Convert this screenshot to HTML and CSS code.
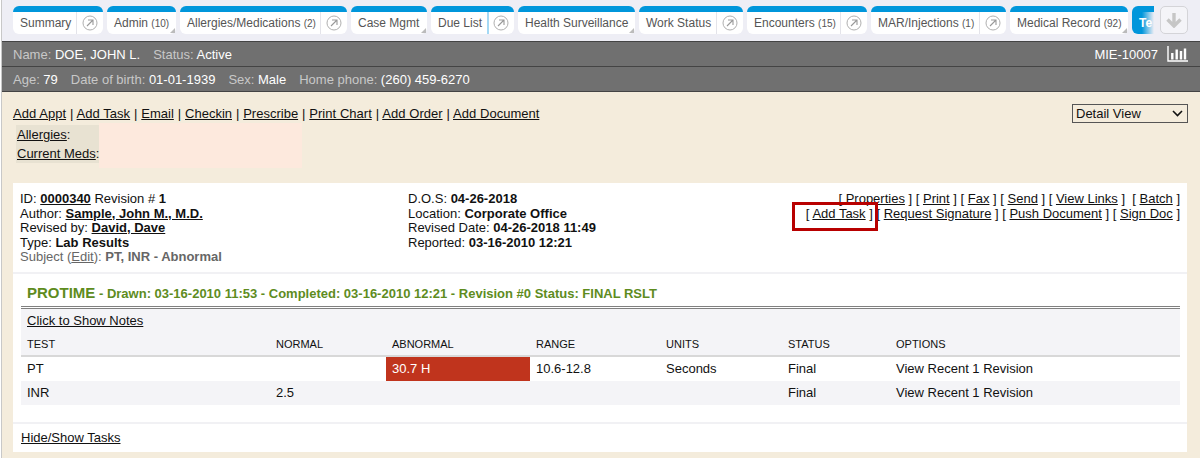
FILE: index.html
```html
<!DOCTYPE html>
<html lang="en">
<head>
    <meta charset="UTF-8">
    <title>Lab Results</title>
    <link rel="stylesheet" href="styles.css">
</head>
<body>
    <svg class="defs" width="0" height="0">
        <symbol id="jump" viewBox="0 0 16 16">
            <circle cx="8" cy="8" r="7" fill="none" stroke="#b0b0b0" stroke-width="1"/>
            <path d="M5 11 L11 5 M6 5 H11 V10" fill="none" stroke="#999" stroke-width="1.1"/>
        </symbol>
    </svg>

    <div class="page">
        <div class="tabbar">
            <div class="tab w-summary"><span class="tab-label">Summary</span><span class="tab-jump"><svg class="jump"><use href="#jump"/></svg></span></div>
            <div class="tab w-admin"><span class="tab-label">Admin <small>(10)</small></span><i class="corner"></i></div>
            <div class="tab w-allergies"><span class="tab-label">Allergies/Medications <small>(2)</small></span><span class="tab-jump"><svg class="jump"><use href="#jump"/></svg></span></div>
            <div class="tab w-case"><span class="tab-label">Case Mgmt</span><i class="corner"></i></div>
            <div class="tab w-due"><span class="tab-label">Due List</span><span class="tab-jump due-jump"><svg class="jump"><use href="#jump"/></svg></span></div>
            <div class="tab w-health"><span class="tab-label">Health Surveillance</span><i class="corner"></i></div>
            <div class="tab w-work"><span class="tab-label">Work Status</span><span class="tab-jump"><svg class="jump"><use href="#jump"/></svg></span></div>
            <div class="tab w-enc"><span class="tab-label">Encounters <small>(15)</small></span><span class="tab-jump"><svg class="jump"><use href="#jump"/></svg></span></div>
            <div class="tab w-mar"><span class="tab-label">MAR/Injections <small>(1)</small></span><span class="tab-jump"><svg class="jump"><use href="#jump"/></svg></span></div>
            <div class="tab w-med"><span class="tab-label">Medical Record <small>(92)</small></span><i class="corner"></i></div>
            <div class="tab tab-active"><span class="tab-label">Te</span></div>
            <div class="more-btn">
                <svg width="18" height="16" viewBox="0 0 18 16"><path d="M9 1 V14 M2.500 7.500 L9 14 L15.500 7.500" fill="none" stroke="#c6c6c6" stroke-width="3.4"/></svg>
            </div>
        </div>

        <div class="patient-bar">
            <div class="patient-info">
                <span class="item">Name: <b>DOE, JOHN L.</b></span>
                <span class="item">Status: <b>Active</b></span>
            </div>
            <div class="patient-id">
                <b>MIE-10007</b>
                <svg width="21" height="16" viewBox="0 0 21 16"><path d="M1 0 V15 H21" fill="none" stroke="#fff" stroke-width="1.400"/><path d="M5.300 7 V13.500 M9.700 3.500 V13.500 M14 5 V13.500 M18 2.500 V13.500" stroke="#fff" stroke-width="2.400"/></svg>
            </div>
        </div>
        <div class="patient-bar second">
            <div class="patient-info">
                <span class="item">Age: <b>79</b></span>
                <span class="item">Date of birth: <b>01-01-1939</b></span>
                <span class="item">Sex: <b>Male</b></span>
                <span class="item">Home phone: <b>(260) 459-6270</b></span>
            </div>
        </div>

        <div class="content">
            <div class="action-row">
                <div class="actions">
                    <a href="#">Add Appt</a> | <a href="#">Add Task</a> | <a href="#">Email</a> | <a href="#">Checkin</a> | <a href="#">Prescribe</a> | <a href="#">Print Chart</a> | <a href="#">Add Order</a> | <a href="#">Add Document</a>
                </div>
                <select class="view-select">
                    <option>Detail View</option>
                </select>
            </div>

            <div class="alerts">
                <div class="alert-labels">
                    <div><a href="#">Allergies</a>:</div>
                    <div><a href="#">Current Meds</a>:</div>
                </div>
                <div class="alert-values"></div>
            </div>

            <div class="panel">
                <div class="doc-head">
                    <div class="doc-col">
                        <div>ID: <a href="#"><b>0000340</b></a> Revision # <b>1</b></div>
                        <div>Author: <a href="#"><b>Sample, John M., M.D.</b></a></div>
                        <div>Revised by: <a href="#"><b>David, Dave</b></a></div>
                        <div>Type: <b>Lab Results</b></div>
                        <div class="subject">Subject (<a href="#">Edit</a>): <b>PT, INR - Abnormal</b></div>
                    </div>
                    <div class="doc-col col-mid">
                        <div>D.O.S: <b>04-26-2018</b></div>
                        <div>Location: <b>Corporate Office</b></div>
                        <div>Revised Date: <b>04-26-2018 11:49</b></div>
                        <div>Reported: <b>03-16-2010 12:21</b></div>
                    </div>
                    <div class="doc-links">
                        <div>[ <a href="#">Properties</a> ] [ <a href="#">Print</a> ] [ <a href="#">Fax</a> ] [ <a href="#">Send</a> ] [ <a href="#">View Links</a> ] &nbsp;[ <a href="#">Batch</a> ]</div>
                        <div><span class="highlight">[ <a href="#">Add Task</a> ]</span> [ <a href="#">Request Signature</a> ] [ <a href="#">Push Document</a> ] [ <a href="#">Sign Doc</a> ]</div>
                    </div>
                </div>

                <div class="result">
                    <div class="result-title"><span class="result-name">PROTIME</span> - Drawn: 03-16-2010 11:53 - Completed: 03-16-2010 12:21 - Revision #0 Status: FINAL RSLT</div>
                    <div class="notes-row"><a href="#">Click to Show Notes</a></div>
                    <table class="result-table">
                        <thead>
                            <tr>
                                <th class="c-test">TEST</th>
                                <th class="c-normal">NORMAL</th>
                                <th class="c-abn">ABNORMAL</th>
                                <th class="c-range">RANGE</th>
                                <th class="c-units">UNITS</th>
                                <th class="c-status">STATUS</th>
                                <th>OPTIONS</th>
                            </tr>
                        </thead>
                        <tbody>
                            <tr>
                                <td>PT</td>
                                <td></td>
                                <td class="abnormal">30.7 H</td>
                                <td>10.6-12.8</td>
                                <td>Seconds</td>
                                <td>Final</td>
                                <td>View Recent 1 Revision</td>
                            </tr>
                            <tr class="shade">
                                <td>INR</td>
                                <td>2.5</td>
                                <td></td>
                                <td></td>
                                <td></td>
                                <td>Final</td>
                                <td>View Recent 1 Revision</td>
                            </tr>
                        </tbody>
                    </table>
                </div>

                <div class="tasks-row"><a href="#">Hide/Show Tasks</a></div>
            </div>
        </div>
    </div>
</body>
</html>
```
FILE: styles.css
```css
html, body {
    margin: 0;
    padding: 0;
}
body {
    font-family: "Liberation Sans", Arial, sans-serif;
    font-size: 13px;
    color: #111;
    background-color: #fff;
    height: 458px;
    overflow: hidden;
    padding-left: 1px;
    box-sizing: border-box;
}
a {
    color: #111;
    text-decoration: underline;
}
.defs {
    display: block;
    height: 0;
}
.page {
    border-left: 1px solid #c8c8c8;
}

/* tabs */
.tabbar {
    display: flex;
    height: 41px;
    box-sizing: border-box;
    padding: 6px 0 0 11px;
    gap: 4px;
    background-color: #eeeef5;
    overflow: hidden;
}
.tab {
    position: relative;
    display: flex;
    height: 28px;
    box-sizing: border-box;
    border-top: 6px solid #0096db;
    border-radius: 6px;
    background-color: #fff;
    color: #555;
    font-size: 12px;
    line-height: 22px;
    flex: none;
}
.tab small {
    font-size: 10px;
}
.tab-label {
    flex: 1;
    padding-left: 7px;
    white-space: nowrap;
}
.tab-jump {
    display: flex;
    align-items: center;
    justify-content: center;
    width: 26px;
    border-left: 1px solid #e4e4ea;
}
.due-jump {
    border-left: 2px solid #a4d9f5;
    width: 23px;
    margin-right: 2px;
}
.jump {
    width: 16px;
    height: 16px;
}
.corner {
    position: absolute;
    right: 1px;
    bottom: 1px;
    width: 0;
    height: 0;
    border-left: 5px solid transparent;
    border-bottom: 5px solid #bbb;
}
.w-summary { width: 90px; }
.w-admin { width: 69px; }
.w-allergies { width: 167px; }
.w-case { width: 76px; }
.w-due { width: 83px; }
.w-health { width: 117px; }
.w-work { width: 104px; }
.w-enc { width: 120px; }
.w-mar { width: 135px; }
.w-med { width: 118px; }
.tab-active {
    width: 22px;
    background: linear-gradient(to right, #0096db 45%, #eeeef5);
    color: #fff;
    font-weight: bold;
    border-radius: 6px 0 0 6px;
}
.tab-active .tab-label {
    overflow: hidden;
}
.more-btn {
    display: flex;
    align-items: center;
    justify-content: center;
    width: 28px;
    height: 28px;
    margin-left: 2px;
    box-sizing: border-box;
    border: 1px solid #d4d4d8;
    border-radius: 5px;
    background-color: #f4f4f8;
}

/* patient bars */
.patient-bar {
    display: flex;
    justify-content: space-between;
    align-items: center;
    height: 25px;
    box-sizing: border-box;
    padding: 0 12px 0 11px;
    border-top: 1px solid #444;
    background-color: #707070;
    color: #c8c8c8;
    font-size: 13px;
}
.patient-bar.second {
    height: 26px;
    border-bottom: 1px solid #444;
}
.patient-bar b {
    font-weight: normal;
    color: #fff;
}
.patient-info {
    display: flex;
    gap: 13px;
}
.patient-id {
    display: flex;
    align-items: center;
    gap: 9px;
}

/* content */
.content {
    height: 366px;
    padding: 0 13px 0 11px;
    box-sizing: border-box;
    background-color: #f4ecdc;
    overflow: hidden;
}
.action-row {
    display: flex;
    justify-content: space-between;
    align-items: flex-start;
    box-sizing: border-box;
    padding-top: 12px;
    height: 31px;
}
.actions {
    line-height: 19px;
    word-spacing: 0.3px;
}
.view-select {
    appearance: none;
    width: 116px;
    height: 19px;
    margin-right: -1px;
    padding: 0 0 0 3px;
    font-family: "Liberation Sans", Arial, sans-serif;
    font-size: 13px;
    color: #111;
    background-color: #f4ecdc;
    background-image: url("data:image/svg+xml,%3Csvg xmlns='http://www.w3.org/2000/svg' width='11' height='7'%3E%3Cpath d='M1 1 L5.500 5.500 L10 1' fill='none' stroke='%23111' stroke-width='1.600'/%3E%3C/svg%3E");
    background-repeat: no-repeat;
    background-position: right 4px center;
    border: 1px solid #555;
    border-radius: 0;
}
.alerts {
    display: flex;
    height: 45px;
    margin-left: 3px;
}
.alert-labels {
    width: 83px;
    height: 38px;
    margin-top: 2px;
    padding-left: 1px;
    box-sizing: border-box;
    background-color: #e8e2d2;
    line-height: 19px;
}
.alert-labels div {
    white-space: nowrap;
}
.alert-values {
    width: 203px;
    height: 45px;
    background-color: #fde9dd;
}

.panel {
    margin-top: 15px;
    background-color: #fff;
}
.doc-head {
    display: flex;
    height: 91px;
    box-sizing: border-box;
    padding: 9px 7px 0 7px;
    line-height: 14.5px;
    border-bottom: 2px solid #f1f1f4;
}
.doc-col {
    width: 388px;
}
.col-mid {
    width: 380px;
}
.subject {
    color: #666;
}
.subject a {
    color: #666;
}
.doc-links {
    flex: 1;
    text-align: right;
    white-space: nowrap;
}
.highlight {
    position: relative;
}
.highlight::after {
    content: "";
    position: absolute;
    left: -14px;
    top: -4px;
    width: 86px;
    height: 29px;
    box-sizing: border-box;
    border: 3px solid #b80000;
}

.result {
    padding: 0 7px 0 8px;
    height: 150px;
    box-sizing: border-box;
    border-bottom: 2px solid #f1f1f4;
}
.result-title {
    height: 35px;
    box-sizing: border-box;
    padding: 10px 0 0 6px;
    border-bottom: 3px double #808080;
    color: #5e8c1e;
    font-weight: bold;
    font-size: 13px;
    line-height: 17px;
    white-space: nowrap;
}
.result-name {
    font-size: 15px;
}
.notes-row {
    height: 23px;
    padding-left: 6px;
    line-height: 23px;
    background-color: #f4f4f7;
}
.result-table {
    width: 100%;
    border-collapse: collapse;
    table-layout: fixed;
}
.result-table th {
    box-sizing: border-box;
    height: 24px;
    padding: 0 0 0 6px;
    font-weight: normal;
    font-size: 11px;
    text-align: left;
    background-color: #f4f4f7;
    border-bottom: 2px solid #d8d8d8;
}
.result-table td {
    height: 24.5px;
    padding: 0 0 1px 6px;
    box-sizing: border-box;
    font-size: 13px;
}
.c-test { width: 249px; }
.c-normal { width: 116px; }
.c-abn { width: 144px; }
.c-range { width: 130px; }
.c-units { width: 122px; }
.c-status { width: 108px; }
.abnormal {
    background-color: #c0341d;
    color: #fff;
}
.shade td {
    background-color: #f4f4f7;
}
.tasks-row {
    height: 28px;
    padding-left: 8px;
    line-height: 27px;
}
```
